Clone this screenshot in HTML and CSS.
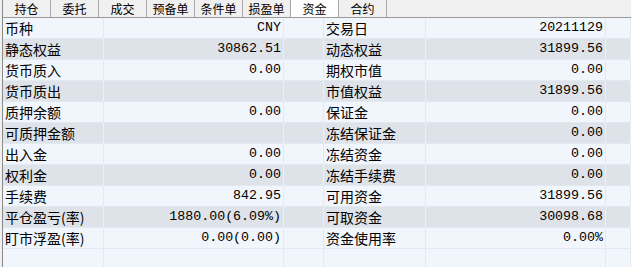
FILE: index.html
```html
<!DOCTYPE html>
<html lang="zh-CN">
<head>
  <meta charset="UTF-8" />
  <title>资金</title>
  <link rel="stylesheet" href="styles.css">
</head>
<body>
  <div class="panel">
    <div class="tabs">
      <div class="tab">持仓</div>
      <div class="tab">委托</div>
      <div class="tab">成交</div>
      <div class="tab">预备单</div>
      <div class="tab">条件单</div>
      <div class="tab">损盈单</div>
      <div class="tab active">资金</div>
      <div class="tab">合约</div>
    </div>

    <div class="grid">
      <div class="row"><div class="cell label">币种</div><div class="cell num">CNY</div><div class="cell"></div><div class="cell label">交易日</div><div class="cell num">20211129</div><div class="cell"></div></div>
      <div class="row alt"><div class="cell label">静态权益</div><div class="cell num">30862.51</div><div class="cell"></div><div class="cell label">动态权益</div><div class="cell num">31899.56</div><div class="cell"></div></div>
      <div class="row"><div class="cell label">货币质入</div><div class="cell num">0.00</div><div class="cell"></div><div class="cell label">期权市值</div><div class="cell num">0.00</div><div class="cell"></div></div>
      <div class="row alt"><div class="cell label">货币质出</div><div class="cell num"></div><div class="cell"></div><div class="cell label">市值权益</div><div class="cell num">31899.56</div><div class="cell"></div></div>
      <div class="row"><div class="cell label">质押余额</div><div class="cell num">0.00</div><div class="cell"></div><div class="cell label">保证金</div><div class="cell num">0.00</div><div class="cell"></div></div>
      <div class="row alt"><div class="cell label">可质押金额</div><div class="cell num"></div><div class="cell"></div><div class="cell label">冻结保证金</div><div class="cell num">0.00</div><div class="cell"></div></div>
      <div class="row"><div class="cell label">出入金</div><div class="cell num">0.00</div><div class="cell"></div><div class="cell label">冻结资金</div><div class="cell num">0.00</div><div class="cell"></div></div>
      <div class="row alt"><div class="cell label">权利金</div><div class="cell num">0.00</div><div class="cell"></div><div class="cell label">冻结手续费</div><div class="cell num">0.00</div><div class="cell"></div></div>
      <div class="row"><div class="cell label">手续费</div><div class="cell num">842.95</div><div class="cell"></div><div class="cell label">可用资金</div><div class="cell num">31899.56</div><div class="cell"></div></div>
      <div class="row alt"><div class="cell label">平仓盈亏(率)</div><div class="cell num">1880.00(6.09%)</div><div class="cell"></div><div class="cell label">可取资金</div><div class="cell num">30098.68</div><div class="cell"></div></div>
      <div class="row"><div class="cell label">盯市浮盈(率)</div><div class="cell num">0.00(0.00)</div><div class="cell"></div><div class="cell label">资金使用率</div><div class="cell num">0.00%</div><div class="cell"></div></div>
      <div class="row filler"><div class="cell"></div><div class="cell"></div><div class="cell"></div><div class="cell"></div><div class="cell"></div><div class="cell"></div></div>
    </div>
  </div>
</body>
</html>
```

FILE: styles.css
```css
html, body {
  margin: 0;
  height: 100%;
  background: #f0f0f0;
}
body {
  font-family: "Noto Sans CJK SC", sans-serif;
  color: #000;
  overflow: hidden;
}
.panel {
  margin-left: 2px;
  height: 100%;
  border-left: 1px solid #8a8a8a;
  display: flex;
  flex-direction: column;
}
.tabs {
  display: flex;
  height: 17px;
  border-bottom: 1px solid #9a9a9a;
  background: #f0f0f0;
}
.tab {
  width: 47px;
  border-right: 1px solid #a8a8a8;
  font-size: 12px;
  line-height: 17px;
  text-align: center;
}
.tab.active { background: #fff; }

.grid {
  flex: 1;
  display: flex;
  flex-direction: column;
  background: #f1f6fd;
}
.row {
  display: grid;
  grid-template-columns: 101px 180px 40px 102px 180px 1fr;
  height: 21px;
  box-sizing: border-box;
  border-bottom: 1px solid #e3e9f1;
  background: #f1f6fd;
}
.row.alt { background: #dee3ea; }
.row.filler { flex: 1; border-bottom: none; }
.cell {
  border-right: 1px solid #e3e9f1;
  white-space: nowrap;
  overflow: hidden;
}
.row.alt .cell { border-right-color: #edf1f7; }
.label {
  font-size: 14px;
  line-height: 20px;
  padding-left: 2px;
}
.num {
  font-family: "Liberation Mono", monospace;
  font-size: 13.3px;
  line-height: 20px;
  text-align: right;
  padding-right: 2px;
}
```
